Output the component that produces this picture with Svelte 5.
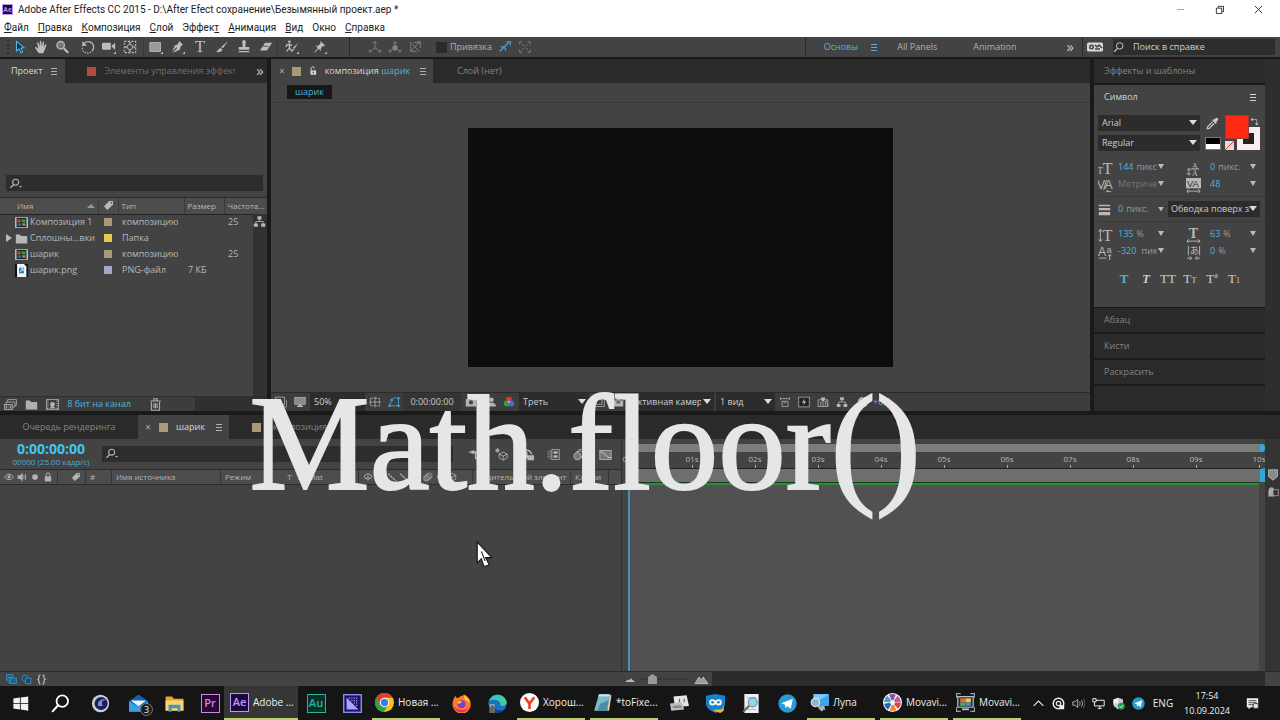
<script lang="ts">
  type Hot = { icon: string; value: string; unit: string; label: string; off?: boolean };
  type Task = { icon: string; label: string; text?: string; wide?: boolean; badge?: string; active?: boolean };

  // ── Иконки, сетка 16×16 ──
  const s = `fill="none" stroke="currentColor"`;
  const corner = `<path fill="currentColor" d="M16 13v3h-3z"/>`;
  const icons: Record<string, string> = {
    arrow: `<path fill="#0c2a3a" stroke="#4cb8e6" stroke-width="1.2" d="M4 1.500v11l3-2.500 2 4.500 2-1-2-4.300 3.700-.2z"/>`,
    hand: `<path fill="currentColor" d="M5.500 15 1.500 9.500c-.8-1.200.5-2 1.400-1.100L5 10 3.600 3.600c-.2-1.200 1.300-1.500 1.600-.4L6.700 7.500 6.600 1.800c0-1.200 1.600-1.200 1.700 0L8.800 7.300l1.100-4.800c.3-1.100 1.800-.8 1.600.4L10.900 8l1.800-2.700c.7-1 2-.2 1.400.9-1 2-1.500 4-2.200 6L10.500 15z"/>`,
    zoom: `<circle cx="6.500" cy="6" r="4.300" fill="#777" stroke="currentColor" stroke-width="1.500"/><path ${s} stroke-width="2.500" d="m10 9.500 5 5"/>`,
    rotate: `<path ${s} stroke-width="1.400" d="M4 3.500a6 6 0 0 1 8.500 9"/><path ${s} stroke-width="1.400" stroke-dasharray="1.500 1.500" d="M2.300 6A6 6 0 0 0 12 13"/><path fill="currentColor" d="M1.500 1v5.500H7z"/>`,
    camera: `<rect x="0" y="3" width="10" height="8" rx="1" fill="currentColor"/><path fill="currentColor" d="m10.500 7 4.500-4v8z"/>${corner}`,
    anchor: `<path ${s} stroke-width="1.300" stroke-dasharray="2.500 1.500" d="M1.500 1.500h13v13h-13z"/><circle cx="8" cy="8" r="3" ${s}/><path fill="currentColor" d="M8 2l2 2H6zM8 14l2-2H6zM2 8l2-2v4zM14 8l-2-2v4z"/>`,
    rect: `<rect x="1" y="3" width="12" height="10" fill="#999" stroke="currentColor"/>${corner}`,
    pen: `<path fill="currentColor" d="m9.500 1 4 4-2.500 2.500-1 3.500L2 14.500l5-5.500-.8-.8L1.200 13.500 4.500 6l3-1z"/>${corner}`,
    brush: `<path fill="currentColor" d="M15 1 9 9.500 7 8zM6.500 9l2 1.800C7.500 13.500 4 14.500 1 13.500c2-.5 3-4 5.500-4.500z"/>`,
    stamp: `<path fill="currentColor" d="M6 1.500c0-1.500 4-1.500 4 0L9.500 8H14v3H2V8h4.500zM2 12.500h12V14H2z"/>`,
    eraser: `<path fill="currentColor" d="M7 3h8l-6 9H1z"/><path fill="none" stroke="#444" d="m4.500 7 6.500.2"/>`,
    roto: `<circle cx="5" cy="2" r="1.500" fill="currentColor"/><path ${s} stroke-width="1.500" d="M5 4v5l-3 4M5 9l3 4M1 8l1.500-3L8 6"/><path fill="currentColor" d="m15 3-4 7-2-1zM9 10l2 1-4 3z"/>${corner}`,
    pin: `<path fill="currentColor" d="m8.500 1 5.500 5.500-1.500.5-1-.3L9 9.500v3L6.300 10 2 14.500 1.500 14 5.500 9.200 3 6.500h3L8.500 4z"/>${corner}`,
    axis: `<path ${s} d="M8 9V2M8 9l-6 4M8 9l6 4M6 4l2-2.500L10 4M4 13.500H1.500V11M12 13.500h2.500V11"/>`,
    axisWorld: `<path ${s} d="M8 9V2M6 4l2-2.500L10 4M4 13.500H1.500V11M12 13.500h2.500V11M2 13l3-2M14 13l-3-2"/><circle cx="8" cy="9" r="3" fill="currentColor"/>`,
    axisView: `<path ${s} d="m2 2 11 11M13 2 3 13M3 5v8h7M6 3h8v6M11 2h3v3"/>`,
    snapEdge: `<path fill="none" stroke="#4cb8e6" stroke-width="1.200" d="M2 13 12 3M10 2h4v4M3 8c3-1 5 0 6 4"/>`,
    snapBox: `<path ${s} d="M2 5V2h3M11 2h3v3M14 11v3h-3M5 14H2v-3M5 5l2 2M11 5 9 7M5 11l2-2M11 11 9 9"/>`,
    sync: `<rect y="3.500" width="16" height="9" rx="1.500" fill="#d8d8d8"/><circle cx="4.500" cy="8" r="2.500" fill="#444"/><circle cx="4.500" cy="8" r="1" fill="#d8d8d8"/><path stroke="#444" stroke-width="1.500" fill="none" d="m8 6 2 2 2-2 3 3M8 10h5"/>`,
    search: `<circle cx="9" cy="6.500" r="4.300" ${s} stroke-width="1.300"/><path ${s} stroke-width="1.500" d="m6 10-4.500 4.500"/>`,
    searchDrop: `<circle cx="7" cy="6.500" r="3.700" ${s} stroke-width="1.300"/><path ${s} stroke-width="1.500" d="m4.500 9.300-4 4"/><path fill="currentColor" d="M11 11h4l-2 2z"/>`,
    tag: `<path fill="currentColor" d="M9 1.500h5.500V7L6 14.500 1.500 9z"/><circle cx="12" cy="4" r="1.200" fill="#444"/>`,
    comp: `<rect width="16" height="13" y="1.500" fill="#b8b8b8"/><rect x="2" y="2.500" width="12" height="11" fill="#122"/><path fill="#c4502a" d="M3 4h4v4H3z"/><path fill="#2e9a48" d="M8 4h5v4H8z"/><path fill="#2a6fb0" d="M3 9h5v3H3z"/><path fill="#b78733" d="M9 9h4v3H9z"/>`,
    folder: `<path fill="currentColor" d="M1 3h5l1.500 2H15v9H1z"/>`,
    png: `<path fill="#111" d="M0 0h16v16H0z"/><path fill="#f4f4f4" d="M2.500 0H11l3 3v13H2.500z"/><path fill="#1c82c8" d="M5 4.500h6v7H5z"/><path stroke="#fff" fill="none" d="m6 10 4-4M7 6h3v3"/>`,
    tree: `<path fill="currentColor" d="M5.500 1.500h5v4h-5zM1 10.500h5v4H1zM10 10.500h5v4h-5z"/><path ${s} d="M8 5v3M3.500 11V8h9v3"/>`,
    interpret: `<path ${s} d="M4.500 5V2h11v7H13M2.500 8V5h11v6H11"/><rect x=".5" y="8" width="10" height="6" fill="#555" stroke="currentColor"/><path ${s} d="M3 9.500v3M8 9.500v3"/>`,
    filmstrip: `<rect x=".5" y="2" width="15" height="12" fill="none" stroke="currentColor"/><path ${s} stroke-dasharray="1.500 1.500" stroke-width="1.500" d="M2.300 3v11M13.700 3v11"/><circle cx="8" cy="8" r="3" fill="currentColor"/><path fill="currentColor" d="M4 13h8l-4-4z"/>`,
    trash: `<path ${s} stroke-width="1.300" d="M3 5v10h10V5M1.500 3.700h13M6 3V1h4v2M6 6.500v6M8 6.500v6M10 6.500v6"/>`,
    lock: `<rect x="3" y="7" width="10" height="8" fill="currentColor"/><path ${s} stroke-width="1.600" d="M5 7V4.500a3 3 0 0 1 6 0V7"/>`,
    unlock: `<rect x="4" y="7" width="9" height="7" fill="currentColor"/><path ${s} stroke-width="1.500" d="M5 7V4a2.600 2.600 0 0 1 5.200 0"/><rect x="7.500" y="9" width="2" height="3" fill="#444"/>`,
    preview: `<path ${s} d="M3.500 14.500h12v-9"/><rect x=".5" y="1.500" width="12" height="10" ${s}/><path fill="currentColor" d="m4 3.500 5 3-5 3z"/>`,
    monitor: `<rect x="1" y="2" width="14" height="9" fill="#8a8a8a" stroke="currentColor"/><path fill="currentColor" d="M6 11h4v2h2v1.500H4V13h2z"/>`,
    guides: `<rect x="2" y="3" width="12" height="10" ${s} stroke-dasharray="4 1"/><path ${s} d="M8 1v14M0 8h16"/>`,
    mask: `<path fill="none" stroke="#3f9fd0" stroke-width="1.200" d="M2 13 5 5c2-3 5-3 9-2v10z"/><path fill="#3f9fd0" d="M.5 11.500h3v3h-3zM3.500 3.500h3v3h-3zM12.500 1.500h3v3h-3zM12.500 11.500h3v3h-3z"/>`,
    photo: `<path fill="currentColor" d="M1 4h3l1-2h6l1 2h3v10H1z"/><circle cx="8" cy="8.500" r="2.800" fill="#444"/>`,
    person: `<circle cx="10" cy="5" r="3" fill="currentColor"/><path fill="currentColor" d="M4 14c0-7 12-7 12 0z"/>`,
    rgb: `<circle cx="8" cy="5" r="4" fill="#d93a35"/><circle cx="5" cy="10" r="4" fill="#32a047"/><circle cx="11" cy="10" r="4" fill="#3b6fe0"/><path fill="#e8e8e8" d="M6.500 7h3L8 10z"/>`,
    region: `<rect x="1" y="2" width="14" height="12" ${s}/><rect x="4" y="5" width="8" height="6" ${s}/>`,
    checker: `<path fill="currentColor" d="M1 2h14v12H1z"/><path fill="#666" d="M1 2h5v4H1zM11 2h4v4h-4zM6 6h5v4H6z"/>`,
    pixel: `<path ${s} d="M2 2v3M14 2v3M2 3.500h12M4 7h8v7H4zM6 9h4"/>`,
    fast: `<rect x="1" y="1.500" width="14" height="13" fill="#222" stroke="currentColor"/><path fill="currentColor" d="M9 3 5 9h3l-1 4 4-6H8z"/>`,
    timelineBtn: `<path ${s} d="M1.500 14V5H4M12 5h2.500v9zM1 14h14M5 14V7M8 14V8M11 14V7"/><path fill="currentColor" d="M5 2h6v3L8 8 5 5z"/>`,
    exposure: `<circle cx="8" cy="8" r="5.500" ${s} stroke-width="3"/><path stroke="#333" fill="none" d="m8 1 2 5M15 8l-5 1M8 15l-2-5M1 8l5-1"/>`,
    eyedrop: `<path fill="currentColor" d="M14.500 1.500c1.500 1.500 0 3-2 4.500l1 1-1.500 1.500-4.500-4.500L9 2.500l1 1c1.500-2 3-3.500 4.500-2z"/><path ${s} stroke-width="1.500" d="m8 6-6 6-.5 2.500L4 14l6-6"/>`,
    swap: `<path ${s} stroke-width="1.400" d="M4 4.500h8V13"/><path fill="currentColor" d="M5 1v7L1 4.500zM8.500 11h7L12 15z"/>`,
    fontSize: `<text x="-1" y="14" font-size="11" font-family="Liberation Serif" fill="currentColor">T</text><text x="5" y="14" font-size="17" font-family="Liberation Serif" fill="currentColor">T</text>`,
    leading: `<text x="6" y="8" font-size="9" font-family="Liberation Serif" fill="currentColor">A</text><text x="6" y="16" font-size="9" font-family="Liberation Serif" fill="currentColor">A</text><path ${s} d="M5 8.500h9M3 8v7M1 10l2-2 2 2M1 13l2 2 2-2"/>`,
    kerning: `<text x="-1" y="12" font-size="13" font-family="Liberation Sans" fill="currentColor">V</text><text x="7" y="12" font-size="13" font-family="Liberation Sans" fill="currentColor">A</text><path ${s} d="M9 2 6 13M14 14.500H9M11 12.500 9 14.500"/>`,
    tracking: `<path fill="currentColor" d="M0 0h16v11H0z"/><text x="1" y="10" font-size="10" font-family="Liberation Sans" fill="#333">VA</text><path ${s} d="M1 14h14M3 12l-2 2 2 2M13 12l2 2-2 2"/>`,
    stroke: `<path fill="currentColor" d="M1 2h14v2H1zM1 6h14v3H1zM1 11h14v4H1z"/>`,
    vscale: `<path ${s} d="M2.500 2v12M.5 4l2-2.500 2 2.500M.5 12l2 2.500 2-2.500"/><text x="5" y="14" font-size="17" font-family="Liberation Serif" fill="currentColor">T</text>`,
    hscale: `<text x="3" y="11" font-size="15" font-weight="bold" font-family="Liberation Serif" fill="currentColor">T</text><path ${s} d="M1 14h14M3 12l-2 2 2 2M13 12l2 2-2 2"/>`,
    baseline: `<text x="0" y="12" font-size="13" font-family="Liberation Sans" fill="currentColor">A</text><text x="9" y="8" font-size="10" font-family="Liberation Sans" fill="currentColor">a</text><path ${s} d="M1 14h8M12.500 10v6M10.500 12l2-2 2 2"/>`,
    tsume: `<text x="4" y="10" font-size="10" font-family="Noto Sans CJK JP" fill="currentColor">あ</text><path ${s} d="M2.500 1v10M14.500 1v10M1 14h5M4 12l2 2-2 2M15 14h-5M12 12l-2 2 2 2"/>`,
    eye: `<path ${s} stroke-width="1.500" d="M1 8c4-6 10-6 14 0-4 5.500-10 5.500-14 0z"/><circle cx="8" cy="7.500" r="2.500" fill="currentColor"/>`,
    speaker: `<path fill="currentColor" d="M1 5h4l4-4v14l-4-4H1z"/><path ${s} stroke-width="1.400" d="M11 5v6M13.500 3v10"/>`,
    dot: `<circle cx="8" cy="8" r="4.500" fill="currentColor"/>`,
    flow: `<path ${s} stroke-width="1.400" d="M0 5h6M6 5h4M8 5v8h3"/><path fill="currentColor" d="M3 3h4v4H3zM10 3h4v4h-4zM11 11h4v4h-4z"/>`,
    cube: `<path ${s} stroke-width="1.300" d="m8 2 6 3v6l-6 3.500L2 11V5zM2 5l6 3 6-3M8 8v6"/>`,
    draft: `<path ${s} d="m10 5 5 2.500V12l-5 3-5-3V7.500zM5 7.500 10 10l5-2.500M10 10v5M3 0v6M0 3h6M1 1l4 4M5 1 1 5"/>`,
    shy: `<path ${s} stroke-width="1.600" d="M2 9c0-8 12-8 12 0"/><path fill="currentColor" d="M7 6h2v7H7zM3 9h3v2H3zM10 9h3v2h-3z"/>`,
    shyBox: `<path ${s} stroke-width="1.600" d="M1 8c0-7 11-7 12 0"/><path fill="currentColor" d="M6 5h2v8H6zM8 9h8v6H8z"/>`,
    frames: `<rect x="6" y="2" width="9" height="12" ${s}/><path ${s} stroke-dasharray="2 1" d="M1.500 4v9M4 3v11"/><path fill="currentColor" d="M8 4h5v3H8zM8 9h5v3H8z"/>`,
    blur: `<circle cx="10" cy="6" r="4.500" ${s}/><circle cx="8" cy="8" r="4.500" ${s}/><circle cx="5.500" cy="10" r="4.500" fill="#777" stroke="currentColor"/>`,
    graph: `<rect x="1" y="3" width="14" height="11" fill="#777" stroke="currentColor"/><path stroke="#ddd" fill="none" d="M2 5c6 0 6 7 13 7"/>`,
    slash: `<path ${s} stroke-width="2" stroke-dasharray="4 1" d="m2 3 12 11"/>`,
    marker: `<path fill="#8a8a8a" stroke="#c0c0c0" d="M2 1h12v9l-6 5-6-5z"/>`,
    ghost: `<path fill="#aaa" d="M1 14c2-2 0-4 1-8 1-6 7-6 8 0v8z"/><rect x="8" y="5" width="7" height="8" fill="#333" stroke="#aaa"/>`,
    toggleA: `<rect x="1" y="1" width="9" height="8" fill="#1d6288" stroke="#3f9fd0"/><rect x="6" y="6" width="9" height="8" fill="#1d6288" stroke="#3f9fd0"/><path stroke="#3f9fd0" fill="none" d="M3 12.500h3M3 5h5"/>`,
    toggleB: `<circle cx="6" cy="6" r="4.500" fill="#174a66" stroke="#3f9fd0"/><rect x="6.500" y="6" width="8" height="8" fill="#174a66" stroke="#3f9fd0"/>`,
    braces: `<path ${s} stroke-width="1.800" d="M6.500 1.500C3 1 5.500 7 3 8c2.500 1 0 7 3.500 6.500M9.500 1.500C13 1 10.500 7 13 8c-2.500 1 0 7-3.500 6.500"/>`,
    hill: `<path fill="#bbb" d="m0 12 5-4 2 1.500L9 6l7 6z"/>`,
    hills: `<path fill="#999" stroke="#ccc" d="m0 13 5-8 3 4 2-4 6 8z"/>`,
    // панель задач
    win: `<path fill="#f2f2f2" d="m2 3.800 5.500-.8v4.700H2zM8.200 2.900 14.500 2v5.700H8.200zM2 8.400h5.500v4.700L2 12.300zM8.200 8.400h6.300V14l-6.300-.9z"/>`,
    find: `<circle cx="9.500" cy="6" r="4.800" fill="none" stroke="#fff" stroke-width="1.500"/><path stroke="#fff" stroke-width="1.700" d="M6 9.500 1 15"/>`,
    cinema: `<circle cx="8" cy="8" r="7.300" fill="#c9ccda"/><circle cx="8.500" cy="8" r="5.500" fill="#15205c"/><path fill="#7f8fd0" d="M6 10c-1-4 3-7 7-5-3 0-5 1-3 5z"/>`,
    mail: `<path fill="#0f63ae" d="m0 6 8-5.500L16 6v9H0z"/><path fill="#eaf4fc" d="M1.500 5.500h13l-6.500 5z"/><path fill="#35a3ec" d="m0 6 8 5 8-5v9H0z"/>`,
    explorer: `<path fill="#e5a82d" d="M.5 2H6l1.500 2h8v10H.5z"/><path fill="#f9d66b" d="M.5 5.500h15V14H.5z"/><path fill="#3d97cf" d="M3 9h10v6h-2.500v-3h-5v3H3z"/>`,
    me: `<rect x=".6" y=".6" width="14.800" height="14.800" fill="#1a1260" stroke="#8c88ee" stroke-width="1.200"/><path fill="#a6a4ff" d="M3 3v10h10z"/><path stroke="#a6a4ff" stroke-dasharray="1 1" fill="none" d="M5 3.500h8M7 5.500h6M9 7.500h4M11 9.500h2"/>`,
    chrome: `<circle cx="8" cy="8" r="8" fill="#fbc116"/><path fill="#e33b2e" d="M1 4a8 8 0 0 1 14 0H8L4.500 10z"/><path fill="#2da14c" d="M1 4a8 8 0 0 0 6.500 12L11 10H4.500z"/><circle cx="8" cy="8" r="4" fill="#fff"/><circle cx="8" cy="8" r="3.100" fill="#3b7de9"/>`,
    firefox: `<path fill="#ff7a22" d="M8 1.500c2 0 2-1 1.500-1.500 4 1.500 6.500 5 6.300 9A7.500 7.500 0 0 1 .5 9C.3 6 1.500 3.500 3 1.500c.2 1 .7 1.500 1.500 2z"/><path fill="#ffd23d" d="M10 1c3 2 5 4 5 7-1-2-3-3-4-3z"/><path fill="#e8316a" d="M1 10c2 6 10 8 14 1-4 4-10 3-14-1z"/><circle cx="8" cy="8.500" r="3.500" fill="#7d3fd0"/><path fill="#ffb02e" d="M4 6c3-1 4 0 5 1-2 0-2 1.500-4 1.500z"/>`,
    edge: `<circle cx="8" cy="8" r="7.700" fill="#1572c8"/><path fill="#45c9a0" d="M1 6C3-1 14-1 15.800 7c0 3-4 4-5.500 2.500C12 6 5 3 1 6z"/><path fill="#0d3f80" d="M5 9c0 5 5 6 9 4-4 5-12 2-9-4z"/><path fill="#666" d="M1 11h5v5H1z"/><path stroke="#aaa" fill="none" d="M2 11V9h3v2"/>`,
    yandex: `<circle cx="8" cy="8" r="8" fill="#fff"/><path stroke="#e8402c" stroke-width="2.200" fill="none" d="m4 3.500 4 5.500 4-5.500M8 8.500v5"/>`,
    notepad: `<path fill="#7db8cc" d="M5 1h9l-2 14H1z"/><path fill="#c7e3ec" d="M5 1h9l-.4 2H4.500z"/><path fill="#4c8ca5" d="m6 9 7-3-1 9H4z"/><path fill="#d9d2c2" d="m14 1 1.500 1-2 13H12z"/>`,
    printers: `<path fill="#e6e6e6" d="m3 2 11-1 2 9-12 1z"/><path fill="#bdbdbd" d="m0 8 10-1 2 6-11 1z"/><path fill="#888" d="m2 10 7-.5 1 2-7 .5z"/><path stroke="#666" fill="none" d="M8 4v3M12 4v3"/>`,
    vpn: `<path fill="#1583cc" d="M0 1.500 8 0l8 1.500V8c0 4-4 6-8 8-4-2-8-4-8-8z"/><path fill="none" stroke="#fff" stroke-width="1.600" d="M8 7C7 4.500 3.500 4.500 3.500 7S7 9.500 8 7s4.500-2.500 4.500 0S9 9.500 8 7z"/><path fill="#e3b83a" d="m6 14 2-1 5 0 2-3v4l-3 2z"/>`,
    doc: `<path fill="#eef1f4" d="M2 0h12v16H2z"/><path stroke="#b9c2cc" d="M4 3h8M4 13h8"/><circle cx="9" cy="7" r="3.800" fill="#9ed0f0" stroke="#6b93b0"/><path stroke="#7a6650" stroke-width="1.800" d="m6 10-5 5"/>`,
    telegram: `<circle cx="8" cy="8" r="7.700" fill="#259bd8"/><path fill="#fff" d="m2.800 7.800 9.700-3.800-1.700 8.500-3-2.200-1.500 1.500-.5-2.800z"/>`,
    magnifier: `<path fill="#3fa4ea" d="M3 1h13v10H3z"/><path fill="#7ccbf8" d="M3 1h13L3 9z"/><path fill="#a9b4bd" d="M9 11h3l1 3H8z"/><circle cx="4.500" cy="8" r="3.500" fill="#8fb5ca" stroke="#dde5ea"/><path stroke="#b8b8b8" stroke-width="2" d="m7 11 3.500 4"/>`,
    movaviA: `<circle cx="8" cy="8" r="8" fill="#f5f5f5"/><circle cx="8" cy="8" r="4.600" fill="none" stroke="#d8453a" stroke-width="5" stroke-dasharray="3.800 25"/><circle cx="8" cy="8" r="4.600" fill="none" stroke="#e98d29" stroke-width="5" stroke-dasharray="0 4.800 3.800 25"/><circle cx="8" cy="8" r="4.600" fill="none" stroke="#2b62b4" stroke-width="5" stroke-dasharray="0 9.600 3.800 25"/><circle cx="8" cy="8" r="4.600" fill="none" stroke="#39a1cf" stroke-width="5" stroke-dasharray="0 14.400 3.800 25"/><circle cx="8" cy="8" r="4.600" fill="none" stroke="#8b51a6" stroke-width="5" stroke-dasharray="0 19.200 3.800 25"/><circle cx="8" cy="8" r="4.600" fill="none" stroke="#d0569b" stroke-width="5" stroke-dasharray="0 24 3.800 25"/>`,
    movaviB: `<path fill="none" stroke="#8fa4b0" d="M.5 4V.5H4M12 .5h3.500V4M.5 12v3.500H4M12 15.500h3.500V12"/><path fill="#23303a" stroke="#b4c4cc" d="M1.500 3h13v9h-13z"/><path fill="#df6a3d" d="M3.500 4.500H8V8H3.500z"/><path fill="#e8c84a" d="M8 4.500h4.500V8H8z"/><path fill="#4aa85a" d="M3.500 8H8v3H3.500z"/><path fill="#4a86c8" d="M8 8h4.500v3H8z"/><path fill="#b4c4cc" d="M5 13h6v1.500H5z"/>`,
    up: `<path fill="none" stroke="#eee" stroke-width="1.300" d="m2 11 6-6 6 6"/>`,
    at: `<circle cx="8" cy="8" r="6.500" fill="none" stroke="#eee" stroke-width="1.800"/><circle cx="8" cy="8" r="2.700" fill="none" stroke="#eee" stroke-width="1.500"/><path fill="#eee" d="M9 10h6v5H9z"/>`,
    volume: `<path fill="none" stroke="#ccc" d="M1 6h3l3-3v10l-3-3H1zM9 5.500c1.200 1.500 1.200 3.500 0 5M11.500 4c2 2.500 2 5.500 0 8"/><path fill="none" stroke="#777" d="M14 2.500c2.500 3.500 2.500 7.500 0 11"/>`,
    net: `<path fill="none" stroke="#eee" stroke-width="1.200" d="M5 4h10v7H3V8M7 14h5M9.500 11v3M1 2h4v4H1zM3 6v3"/>`,
    defender: `<path fill="#f2f2f2" d="m7.500 1 6 2v5c0 3-3 5-6 7-3-2-6-4-6-7V3z"/><path fill="#999" d="M7.500 1v14c-3-2-6-4-6-7h12V3z" opacity=".4"/><circle cx="11.500" cy="11.500" r="4.300" fill="#1c9a4d"/><path fill="none" stroke="#fff" stroke-width="1.200" d="m9.500 11.500 1.500 1.500 2.500-3"/>`,
    notes: `<path fill="#f2f2f2" d="M1 1.500h14v11H6L3 15v-2.500H1z"/><path stroke="#222" d="M3 4.500h10M3 7h10M3 9.500h6"/><circle cx="12" cy="11" r="3.500" fill="#ddd" stroke="#222"/>`,
  };

  const menu = ["Файл", "Правка", "Композиция", "Слой", "Эффект", "Анимация", "Вид", "Окно", "Справка"];
  // позиция подчёркнутой буквы, -1 — нет
  const accel = [0, 0, 0, 0, 5, 0, 0, -1, 0];

  const tools = [
    { cls: "t21", items: ["arrow", "hand", "zoom"] },
    { cls: "t21 g2", items: ["rotate", "camera", "anchor"] },
    { cls: "t22", items: ["rect", "pen", "type", "brush", "stamp", "eraser"] },
    { cls: "t28", items: ["roto", "pin"] },
    { cls: "t20", items: ["axis", "axisWorld", "axisView"] },
  ];

  const files = [
    { icon: "comp", name: "Композиция 1", color: "#a99a78", type: "композицию", size: "", rate: "25" },
    { icon: "folder", name: "Сплошны...вки", color: "#e4c956", type: "Папка", size: "", rate: "" },
    { icon: "comp", name: "шарик", color: "#a99a78", type: "композицию", size: "", rate: "25" },
    { icon: "png", name: "шарик.png", color: "#a6a6c8", type: "PNG-файл", size: "7 КБ", rate: "" },
  ];

  const metrics: Hot[] = [
    { icon: "fontSize", value: "144", unit: "пикс.", label: "Размер шрифта" },
    { icon: "leading", value: "0", unit: "пикс.", label: "Интерлиньяж" },
    { icon: "kerning", value: "Метрические", unit: "", label: "Кернинг", off: true },
    { icon: "tracking", value: "48", unit: "", label: "Трекинг" },
  ];
  const scales: Hot[] = [
    { icon: "vscale", value: "135", unit: "%", label: "Масштаб по вертикали" },
    { icon: "hscale", value: "63", unit: "%", label: "Масштаб по горизонтали" },
    { icon: "baseline", value: "-320", unit: "пикс.", label: "Смещение базовой линии" },
    { icon: "tsume", value: "0", unit: "%", label: "Цумэ" },
  ];

  const seconds = ["00s", "01s", "02s", "03s", "04s", "05s", "06s", "07s", "08s", "09s", "10s"];

  const tasks: Task[] = [
    { icon: "win", label: "Пуск", wide: true },
    { icon: "find", label: "Поиск", wide: true },
    { icon: "cinema", label: "Cinema 4D", wide: true },
    { icon: "mail", label: "Почта", badge: "3" },
    { icon: "explorer", label: "Проводник" },
    { icon: "Pr", label: "Premiere Pro" },
    { icon: "Ae", label: "After Effects", text: "Adobe ...", active: true },
    { icon: "Au", label: "Audition" },
    { icon: "me", label: "Media Encoder" },
    { icon: "chrome", label: "Chrome", text: "Новая ..." },
    { icon: "firefox", label: "Firefox" },
    { icon: "edge", label: "Edge" },
    { icon: "yandex", label: "Яндекс", text: "Хорош..." },
    { icon: "notepad", label: "Блокнот", text: "*toFixe..." },
    { icon: "printers", label: "Принтеры" },
    { icon: "vpn", label: "VPN" },
    { icon: "doc", label: "Просмотр" },
    { icon: "telegram", label: "Telegram" },
    { icon: "magnifier", label: "Экранная лупа", text: "Лупа" },
    { icon: "movaviA", label: "Movavi Editor", text: "Movavi..." },
    { icon: "movaviB", label: "Movavi Recorder", text: "Movavi..." },
  ];

  let snap = $state(false);
  let zoom = $state(20);
</script>

{#snippet icon(name: string)}
  <svg class="icon" viewBox="0 0 16 16" aria-hidden="true">{@html icons[name]}</svg>
{/snippet}

{#snippet adobe(name: string)}
  <span class="adobe {name}">{name}</span>
{/snippet}

{#snippet burger()}
  <span class="burger"></span>
{/snippet}

{#snippet hot(h: Hot)}
  <label class="hot">
    {@render icon(h.icon)}
    <span class="hot-value" class:off={h.off}>
      <input value={h.value} aria-label={h.label} style:width="{h.value.length}ch" />{h.unit}
    </span>
    <i class="caret"></i>
  </label>
{/snippet}

<div class="screen">
  <header class="title-bar">
    <span class="adobe Ae small">Ae</span>
    <span class="title">Adobe After Effects CC 2015 - D:\After Efect сохранение\Безымянный проект.aep *</span>
    <div class="win-buttons">
      <button aria-label="Свернуть"><svg viewBox="0 0 10 10"><path d="M1 5h8" stroke="#999" /></svg></button>
      <button aria-label="Восстановить"><svg viewBox="0 0 10 10"><path d="M1.500 3.500h6v6h-6zM3.500 3V1.500h6v6H8" fill="none" stroke="#222" /></svg></button>
      <button aria-label="Закрыть"><svg viewBox="0 0 10 10"><path d="m1 1 8 8M9 1 1 9" stroke="#222" /></svg></button>
    </div>
  </header>

  <nav class="menu">
    {#each menu as item, i}
      <button>{#if accel[i] >= 0}{item.slice(0, accel[i])}<u>{item[accel[i]]}</u>{item.slice(accel[i] + 1)}{:else}{item}{/if}</button>
    {/each}
  </nav>

  <div class="toolbar">
    <span class="grip"></span>
    {#each tools as group}
      <div class="tools {group.cls}">
        {#each group.items as name}
          <button aria-label={name}>
            {#if name === "type"}<span class="type-tool">T</span>{:else}{@render icon(name)}{/if}
          </button>
        {/each}
      </div>
    {/each}
    <label class="snap"><input type="checkbox" bind:checked={snap} />Привязка</label>
    <div class="tools t20 snap-tools">
      <button aria-label="Привязка к краям">{@render icon("snapEdge")}</button>
      <button aria-label="Привязка к элементам">{@render icon("snapBox")}</button>
    </div>
    <div class="workspaces">
      <button class="blue ws-main">Основы {@render burger()}</button>
      <button class="ws">All Panels</button>
      <button class="ws">Animation</button>
      <button class="more" aria-label="Ещё">»</button>
    </div>
    <button class="sync" aria-label="Синхронизация">{@render icon("sync")}</button>
    <label class="help">
      {@render icon("search")}
      <input type="search" placeholder="Поиск в справке" />
    </label>
  </div>

  <main class="panels">
    <!-- Проект -->
    <section class="project">
      <div class="tabs">
        <button class="tab on tab-project">Проект {@render burger()}</button>
        <button class="tab tab-fx"><i class="sq" style:background="#b54b3c"></i><span>Элементы управления эффектами</span></button>
        <button class="more" aria-label="Ещё">»</button>
      </div>
      <div class="thumb"></div>
      <label class="search">{@render icon("searchDrop")}<input type="search" aria-label="Поиск в проекте" /></label>
      <div class="files">
        <table>
          <colgroup><col class="c-name" /><col class="c-tag" /><col class="c-type" /><col class="c-size" /><col /></colgroup>
          <thead>
            <tr>
              <th class="name-head"><span>Имя<i class="sort"></i></span></th>
              <th class="tag-head">{@render icon("tag")}</th>
              <th>Тип</th>
              <th>Размер</th>
              <th>Частота...</th>
            </tr>
          </thead>
          <tbody>
            {#each files as file}
              <tr>
                <td><span class="file"><i class="twist" class:show={file.icon === "folder"}></i>{@render icon(file.icon)}{file.name}</span></td>
                <td class="mid"><i class="sq label" style:background={file.color}></i></td>
                <td>{file.type}</td>
                <td>{file.size}</td>
                <td>{file.rate}</td>
              </tr>
            {/each}
          </tbody>
        </table>
        <div class="file-scroll">{@render icon("tree")}</div>
      </div>
      <footer class="project-foot">
        <button aria-label="Интерпретировать">{@render icon("interpret")}</button>
        <button aria-label="Новая папка">{@render icon("folder")}</button>
        <button aria-label="Новая композиция">{@render icon("filmstrip")}</button>
        <button class="blue depth">8 бит на канал</button>
        <button aria-label="Удалить">{@render icon("trash")}</button>
        <span class="hscroll"></span>
      </footer>
    </section>

    <!-- Композиция -->
    <section class="comp">
      <div class="tabs">
        <button class="tab on tab-comp">
          <span class="close">×</span><i class="sq" style:background="#a99a78"></i>{@render icon("unlock")}
          <span>композиция <b class="blue">шарик</b></span>{@render burger()}
        </button>
        <button class="tab tab-layer">Слой (нет)</button>
      </div>
      <div class="crumbs"><button class="blue">шарик</button></div>
      <div class="viewer"><div class="canvas"></div></div>
      <footer class="comp-foot">
        <button aria-label="Просмотр">{@render icon("preview")}</button>
        <button aria-label="Монитор">{@render icon("monitor")}</button>
        <label class="drop d50"><select aria-label="Масштаб"><option>50%</option></select></label>
        <button aria-label="Сетка">{@render icon("guides")}</button>
        <button aria-label="Маски">{@render icon("mask")}</button>
        <button class="time">0:00:00:00</button>
        <button aria-label="Снимок">{@render icon("photo")}</button>
        <button aria-label="Показать снимок">{@render icon("person")}</button>
        <button aria-label="Каналы">{@render icon("rgb")}</button>
        <label class="drop d-res"><select aria-label="Разрешение"><option>Треть</option></select></label>
        <button aria-label="Область">{@render icon("region")}</button>
        <button aria-label="Прозрачность">{@render icon("checker")}</button>
        <label class="drop d-cam"><select aria-label="Камера"><option>Активная камера</option></select></label>
        <label class="drop d-view"><select aria-label="Виды"><option>1 вид</option></select></label>
        <button aria-label="Пропорции пикселей">{@render icon("pixel")}</button>
        <button aria-label="Быстрый просмотр">{@render icon("fast")}</button>
        <button aria-label="Таймлайн">{@render icon("timelineBtn")}</button>
        <button aria-label="Блок-схема">{@render icon("tree")}</button>
        <button class="expo" aria-label="Экспозиция">{@render icon("exposure")}</button>
        <button class="blue expo-value">+0,0</button>
      </footer>
    </section>

    <!-- Символ -->
    <aside class="side">
      <div class="stack">
        <button class="fold">Эффекты и шаблоны</button>
        <section class="char">
          <h2>Символ {@render burger()}</h2>
          <div class="fonts">
            <div class="font-selects">
              <label class="drop"><select aria-label="Шрифт"><option>Arial</option></select></label>
              <label class="drop"><select aria-label="Начертание"><option>Regular</option></select></label>
            </div>
            <div class="font-mid">
              <button aria-label="Пипетка">{@render icon("eyedrop")}</button>
              <button class="bw" aria-label="Чёрный и белый"></button>
            </div>
            <div class="swatches">
              <button class="stroke-color" aria-label="Цвет обводки"></button>
              <button class="fill-color" aria-label="Цвет заливки"></button>
              <button class="no-color" aria-label="Без заливки"></button>
              <button class="swap" aria-label="Поменять местами">{@render icon("swap")}</button>
            </div>
          </div>
          <div class="metrics">
            {#each metrics as m}{@render hot(m)}{/each}
          </div>
          <div class="stroke-row">
            {@render hot({ icon: "stroke", value: "0", unit: "пикс.", label: "Толщина обводки" })}
            <label class="drop"><select aria-label="Порядок обводки"><option>Обводка поверх заливки</option></select></label>
          </div>
          <div class="metrics">
            {#each scales as m}{@render hot(m)}{/each}
          </div>
          <div class="faux">
            <button class="on"><b>T</b></button>
            <button><b><i>T</i></b></button>
            <button>TT</button>
            <button>T<small>T</small></button>
            <button>T<sup>a</sup></button>
            <button>T<sub>1</sub></button>
          </div>
        </section>
        <button class="fold">Абзац</button>
        <button class="fold">Кисти</button>
        <button class="fold">Раскрасить</button>
      </div>
    </aside>
  </main>

  <!-- Таймлайн -->
  <section class="timeline">
    <div class="tabs">
      <button class="tab tab-queue">Очередь рендеринга</button>
      <button class="tab on tab-seq"><span class="close">×</span><i class="sq" style:background="#a99a78"></i>шарик {@render burger()}</button>
      <button class="tab tab-next"><i class="sq" style:background="#a99a78"></i>композиция 1</button>
    </div>
    <div class="tl-grid">
      <div class="layers">
        <div class="tl-top">
          <div class="clock">
            <strong>0:00:00:00</strong>
            <span>00000 (25.00 кадр/с)</span>
          </div>
          <label class="search">{@render icon("searchDrop")}<input type="search" aria-label="Поиск слоя" /></label>
          <div class="tl-icons">
            {#each ["flow", "draft", "shyBox", "frames", "blur", "graph"] as name}
              <button aria-label={name}>{@render icon(name)}</button>
            {/each}
          </div>
        </div>
        <div class="cols">
          <span class="col av">{@render icon("eye")}{@render icon("speaker")}{@render icon("dot")}{@render icon("lock")}</span>
          <span class="col tagcol">{@render icon("tag")}</span>
          <span class="col num">#</span>
          <span class="col src">Имя источника</span>
          <span class="col mode">Режим<span>T</span><span>TrkMat</span></span>
          <span class="col switches">
            {#each ["shy", "exposure", "slash", "slash", "frames", "blur", "dot", "cube"] as name}{@render icon(name)}{/each}
          </span>
          <span class="col parent">Родительский элемент</span>
          <span class="col keys">Ключи</span>
        </div>
        <div class="layer-body"></div>
      </div>
      <div class="track">
        <div class="nav-bar"></div>
        <div class="ruler">
          {#each seconds as sec}<span>{sec}</span>{/each}
        </div>
        <div class="work"></div>
        <div class="cache"></div>
        <div class="lane"></div>
      </div>
      <div class="tl-side">
        {@render icon("marker")}
        {@render icon("ghost")}
      </div>
    </div>
    <footer class="tl-foot">
      <div class="tl-modes">
        <button aria-label="Переключатели слоёв">{@render icon("toggleA")}</button>
        <button aria-label="Режимы">{@render icon("toggleB")}</button>
        <button aria-label="Точки входа и выхода">{@render icon("braces")}</button>
      </div>
      <label class="zoomer">
        {@render icon("hill")}
        <input type="range" min="0" max="100" bind:value={zoom} aria-label="Масштаб времени" />
        {@render icon("hills")}
      </label>
      <span class="corner"></span>
    </footer>
  </section>

  <footer class="taskbar">
    {#each tasks as task}
      <button class="task" class:wide={task.wide} class:open={task.text} class:active={task.active} aria-label={task.label}>
        {#if task.icon.length === 2 && task.icon !== "me"}{@render adobe(task.icon)}{:else}{@render icon(task.icon)}{/if}
        {#if task.text}<span>{task.text}</span>{/if}
        {#if task.badge}<em>{task.badge}</em>{/if}
      </button>
    {/each}
    <div class="tray">
      {#each ["up", "at", "volume", "net", "defender", "telegram"] as name}
        <button aria-label={name}>{@render icon(name)}</button>
      {/each}
      <button class="lang">ENG</button>
      <button class="date"><span>17:54</span><span>10.09.2024</span></button>
      <button class="note" aria-label="Уведомления">{@render icon("notes")}</button>
    </div>
  </footer>

  <div class="caption">Math.floor()</div>
  <svg class="cursor" viewBox="0 0 16 26" aria-hidden="true">
    <path d="M1 1v20l4-4 2.500 7.500 5-1.500-3.500-7h6z" fill="#fff" stroke="#111" />
    <path d="m5 10 3.500 9" stroke="#111" />
  </svg>
</div>

<style>
  :global(body) { background: #2a2a2a; }
  :global(*) { box-sizing: border-box; }

  .screen {
    position: relative;
    display: flex;
    flex-direction: column;
    min-height: 100vh;
    overflow: hidden;
    background: #1a1a1a;
    color: #b8b8b8;
    font: 9px/12px "Open Sans", "Noto Sans", sans-serif;
    white-space: nowrap;
  }
  button, input, select {
    font: inherit;
    color: inherit;
    background: none;
    border: 0;
    border-radius: 0;
    padding: 0;
    margin: 0;
    outline: none;
    min-width: 0;
  }
  button {
    display: flex;
    align-items: center;
    justify-content: center;
    flex-shrink: 0;
    white-space: nowrap;
  }
  .icon { width: 13px; height: 13px; flex-shrink: 0; }
  .blue { color: #4cb4dc; }
  .sq { width: 9px; height: 9px; flex-shrink: 0; }

  .burger {
    width: 6px;
    height: 7px;
    border-top: 1px solid;
    border-bottom: 1px solid;
    background: linear-gradient(currentColor, currentColor) center / 100% 1px no-repeat;
  }

  /* ── Заголовок и меню ── */
  .title-bar, .menu { font-family: Roboto, "Open Sans", sans-serif; font-size: 10px; }
  .title-bar {
    display: flex;
    align-items: center;
    height: 19px;
    padding-left: 2px;
    gap: 5px;
    background: #fff;
    color: #222;
  }
  .win-buttons { display: flex; margin-left: auto; padding-right: 2px; }
  .win-buttons button { width: 39px; height: 19px; }
  .win-buttons svg { width: 9px; height: 9px; }
  .menu {
    display: flex;
    height: 18px;
    padding: 0 0 0 4px;
    gap: 9px;
    background: #fff;
    color: #222;
  }

  .adobe {
    display: grid;
    place-items: center;
    width: 19px;
    height: 19px;
    border: 1px solid;
    font-size: 11px;
    font-weight: 600;
    flex-shrink: 0;
  }
  .adobe.Pr { color: #c98be0; background: #2a0634; }
  .adobe.Ae { color: #b79af0; background: #1f0740; }
  .adobe.Au { color: #2bb59a; background: #06302a; }
  .adobe.small { width: 11px; height: 11px; font-size: 7px; line-height: 8px; }

  /* ── Панель инструментов ── */
  .toolbar {
    display: flex;
    align-items: center;
    height: 20px;
    background: #434343;
  }
  .grip { width: 9px; height: 14px; border-right: 2px dotted #2c2c2c; flex-shrink: 0; }
  .tools { display: flex; height: 20px; color: #bdbdbd; }
  .tools .icon { width: 14px; height: 14px; }
  .t21 button { width: 21px; }
  .t21.g2 { margin-left: 5px; padding-right: 3px; border-right: 1px solid #383838; }
  .t22 { padding-left: 1px; }
  .t22 button { width: 22px; }
  .t28 { border-left: 1px solid #383838; padding-right: 15px; border-right: 1px solid #2c2c2c; }
  .t28 button { width: 28px; }
  .t20 { padding-left: 15px; color: #858585; }
  .t20 button { width: 20px; }
  .type-tool { font: 17px/16px "Liberation Serif", serif; }
  .snap { display: flex; align-items: center; gap: 3px; margin-left: 11px; color: #b0b0b0; }
  .snap input { appearance: none; width: 11px; height: 11px; background: #2a2a2a; }
  .snap-tools { padding-left: 3px; }
  .workspaces {
    display: flex;
    align-items: center;
    height: 20px;
    margin-left: auto;
    padding-left: 18px;
    border-left: 1px solid #2c2c2c;
    border-right: 1px solid #2c2c2c;
    color: #b0b0b0;
  }
  .ws-main { gap: 13px; margin-right: 20px; }
  .ws { margin-right: 36px; }
  .workspaces .more { margin-left: 14px; padding-right: 8px; }
  .more { padding-bottom: 3px; font-size: 15px; color: #c8c8c8; }
  .sync { width: 24px; }
  .sync .icon { width: 16px; height: 16px; }
  .help {
    display: flex;
    align-items: center;
    flex: 0 1 162px;
    height: 16px;
    margin: 0 5px 0 6px;
    gap: 8px;
    background: #2d2d2d;
    color: #ccc;
  }
  .help .icon { width: 12px; height: 12px; }
  .help input { flex: 1; }
  input::placeholder { color: #d0d0d0; opacity: 1; }

  /* ── Вкладки ── */
  .tabs { display: flex; height: 24px; background: #2a2a2a; flex-shrink: 0; }
  .tab { color: #858585; }
  .tab.on { background: #434343; color: #d8d8d8; }
  .tab .burger { color: #b0b0b0; }
  .close { color: #aaa; font-size: 10px; }

  .panels {
    display: grid;
    grid-template-columns: 267px minmax(0, 1fr) 186px;
    grid-template-rows: minmax(0, 1fr);
    gap: 4px;
    flex: 0 0 352px;
    margin: 2px 0 4px;
  }
  .project, .comp { display: flex; flex-direction: column; min-width: 0; background: #434343; }

  .search {
    display: flex;
    align-items: center;
    height: 16px;
    padding-left: 4px;
    background: #2d2d2d;
    color: #bbb;
  }
  .search input { flex: 1; }

  /* ── Проект ── */
  .tab-project { padding: 0 8px 0 11px; gap: 9px; }
  .tab-fx { flex: 1 1 0; min-width: 0; padding-left: 22px; gap: 8px; justify-content: flex-start; overflow: hidden; color: #707070; }
  .tab-fx span { overflow: hidden; }
  .project .more { width: 14px; margin-left: 18px; }
  .thumb { height: 92px; border-bottom: 1px solid #404040; }
  .project > .search { margin: 0 4px 6px 6px; }
  .files { display: flex; flex: 1; position: relative; border-top: 1px solid #2a2a2a; }
  table { width: 100%; height: 80px; border-collapse: collapse; table-layout: fixed; }
  .c-name { width: 98px; }
  .c-tag { width: 20px; }
  .c-type { width: 66px; }
  .c-size { width: 40px; }
  th {
    height: 16px;
    padding: 0 0 0 3px;
    text-align: left;
    font-weight: 400;
    font-size: 8px;
    background: #4c4c4c;
    border-bottom: 1px solid #222;
    border-left: 1px solid #3a3a3a;
  }
  th .icon { display: block; width: 11px; height: 11px; margin-left: 1px; }
  .name-head { padding: 0 3px 0 17px; border-left: 0; }
  .name-head span { display: flex; align-items: center; justify-content: space-between; }
  .sort { border: 4px solid transparent; border-top: 0; border-bottom: 4px solid #999; }
  td { height: 16px; padding: 0 0 0 4px; }
  td:first-child { padding: 0; }
  .mid { padding: 0 0 0 6px; }
  .sq.label { display: block; width: 8px; height: 8px; }
  .file { display: flex; align-items: center; gap: 2px; }
  .file .icon { width: 13px; height: 13px; }
  .twist { width: 6px; height: 8px; margin: 0 1px 0 6px; }
  .twist.show { background: #bbb; clip-path: polygon(0 0, 100% 50%, 0 100%); }
  .file-scroll {
    position: absolute;
    top: 16px;
    right: 0;
    bottom: 0;
    width: 14px;
    padding-top: 1px;
    background: #323232;
  }
  .project-foot { display: flex; height: 15px; background: #3d3d3d; border-top: 1px solid #2e2e2e; color: #b0b0b0; }
  .project-foot button { width: 21px; }
  .project-foot .depth { width: 72px; }
  .project-foot button:last-of-type { width: 40px; }
  .hscroll { flex: 1; margin-left: 20px; background: #303030; }

  /* ── Композиция ── */
  .tab-comp { padding: 0 7px 0 8px; gap: 7px; }
  .tab-comp .icon { width: 10px; height: 10px; }
  .tab-comp b { font-weight: 400; }
  .tab-comp .burger { margin-left: 3px; }
  .tab-layer { padding-left: 24px; }
  .crumbs { height: 20px; padding: 2px 0 0 16px; border-bottom: 1px solid #393939; }
  .crumbs button { width: 45px; height: 14px; background: #171717; }
  .viewer { flex: 1; display: grid; place-items: center; }
  .canvas { width: 52%; aspect-ratio: 16 / 9; background: #0d0d0d; }
  .comp-foot { display: flex; height: 19px; border-top: 1px solid #2a2a2a; background: #3d3d3d; color: #b4b4b4; }
  .comp-foot button { width: 19px; }
  .comp-foot .icon { width: 12px; height: 12px; }

  .drop { position: relative; display: flex; background: #2c2c2c; color: #ccc; min-width: 0; }
  .drop select { appearance: none; flex: 1; width: 100%; padding: 0 13px 0 4px; overflow: hidden; }
  .drop::after, .caret {
    content: "";
    width: 8px;
    height: 5px;
    background: #ddd;
    clip-path: polygon(0 0, 100% 0, 50% 100%);
  }
  .drop::after { position: absolute; right: 3px; top: calc(50% - 3px); pointer-events: none; }
  .d50 { width: 55px; margin-left: 1px; }
  .comp-foot .time { width: 58px; background: #353535; color: #c8c8c8; }
  .d-res { width: 70px; margin-left: 1px; }
  .d-cam { width: 86px; margin-left: 1px; }
  .d-view { width: 59px; margin-left: 2px; }
  .comp-foot .expo { margin-left: 2px; }
  .comp-foot .expo-value { width: 20px; }

  /* ── Символ ── */
  .side { padding-right: 15px; background: #2e2e2e; }
  .stack { display: flex; flex-direction: column; height: 100%; background: #2a2a2a; }
  .fold {
    height: 26px;
    padding: 0 10px;
    justify-content: flex-start;
    background: #2a2a2a;
    border-bottom: 2px solid #1a1a1a;
    color: #858585;
  }
  .char { height: 223px; padding-left: 4px; background: #434343; border-bottom: 1px solid #1a1a1a; }
  h2 {
    display: flex;
    align-items: center;
    justify-content: space-between;
    height: 24px;
    margin: 0 0 6px;
    padding: 0 9px 0 6px;
    font: inherit;
    color: #d0d0d0;
  }
  .fonts { display: flex; height: 36px; }
  .font-selects { display: grid; width: 102px; gap: 4px; }
  .font-mid { display: flex; flex-direction: column; align-items: center; justify-content: space-between; width: 25px; padding: 2px 0 1px; color: #c8c8c8; }
  .bw { width: 16px; height: 13px; background: linear-gradient(#000 50%, #fff 50%); border: 1px solid #777; }
  .swatches { position: relative; flex: 1; }
  .swatches button { position: absolute; }
  .fill-color { left: 0; top: 0; width: 24px; height: 24px; background: #ff2a12; border: 1px solid #a33; }
  .stroke-color { left: 12px; top: 12px; width: 23px; height: 23px; background: #222; border: 6px solid #f8eeee; }
  .no-color { left: 0; top: 26px; width: 9px; height: 9px; background: linear-gradient(135deg, #ddd 45%, #d33 45% 55%, #ddd 55%); }
  .swatches .swap { left: 25px; top: 2px; }
  .swap .icon { width: 9px; height: 9px; }

  .metrics { display: grid; grid-template-columns: 88px 1fr; grid-auto-rows: 17px; padding: 7px 7px 4px 0; border-bottom: 1px solid #393939; }
  .hot { display: flex; align-items: center; gap: 4px; min-width: 0; }
  .hot .icon { width: 15px; height: 15px; margin-top: 3px; }
  .metrics .hot:nth-child(even) { gap: 8px; }
  .hot-value { display: flex; gap: 3px; flex: 0 0 39px; width: 39px; margin: 0 -3px 0 1px; overflow: hidden; color: #999; }
  .metrics .hot:nth-child(even) .hot-value { margin-right: -7px; }
  .hot-value input { color: #4cb4dc; flex-shrink: 0; }
  .hot-value.off input { color: #777; }
  .caret { flex-shrink: 0; width: 6px; background: #bbb; }
  .stroke-row { display: flex; height: 24px; padding: 4px 5px 4px 0; gap: 4px; }
  .stroke-row .icon { margin-top: 0; width: 13px; height: 13px; margin-right: 2px; }
  .stroke-row .drop { flex: 1; }
  .stroke-row select { padding: 0 11px 0 3px; }
  .stroke-row + .metrics { border-top: 1px solid #393939; border-bottom: 0; padding-top: 3px; }
  .faux { display: flex; padding: 9px 0 0 15px; font: 13px/14px "Liberation Serif", serif; color: #ccc; }
  .faux button { width: 22px; align-items: baseline; }
  .faux .on { color: #4cb4dc; }
  .faux small { font-size: 9px; }
  .faux sup, .faux sub { font-size: 8px; line-height: 8px; }
  .faux sup { align-self: flex-start; }

  /* ── Таймлайн ── */
  .timeline { flex: 1; display: flex; flex-direction: column; background: #434343; }
  .tab-queue { width: 138px; }
  .tab-seq { width: 91px; gap: 8px; }
  .tab-seq .burger { margin-left: 3px; }
  .tab-next { padding-left: 23px; gap: 12px; }
  .tl-grid { flex: 1; display: grid; grid-template-columns: 622px minmax(0, 1fr) 15px; }
  .layers { display: flex; flex-direction: column; border-right: 1px solid #2e2e2e; }
  .tl-top { display: flex; align-items: center; height: 30px; }
  .clock { display: flex; flex-direction: column; align-items: center; width: 102px; color: #45c3f0; }
  .clock strong { font: bold 14px/15px "Open Sans", sans-serif; }
  .clock span { font-size: 8px; line-height: 12px; color: #4ba9d2; }
  .tl-top .search { flex: 0 1 351px; margin-bottom: 1px; }
  .tl-icons { display: flex; margin-left: 9px; }
  .tl-icons button { width: 26px; }
  .cols {
    display: flex;
    height: 16px;
    background: #4c4c4c;
    border-top: 1px solid #2a2a2a;
    border-bottom: 1px solid #2a2a2a;
    font-size: 8px;
    color: #b4b4b4;
  }
  .cols .icon { width: 10px; height: 10px; }
  .col { display: flex; align-items: center; border-right: 1px solid #363636; padding-left: 4px; flex-shrink: 0; overflow: hidden; }
  .av { width: 58px; gap: 3px; }
  .tagcol { width: 28px; justify-content: center; padding-left: 9px; }
  .num { width: 26px; }
  .src { width: 109px; }
  .mode { width: 138px; }
  .mode span { margin-left: 5px; }
  .mode span:first-child { margin-left: 36px; }
  .switches { width: 114px; gap: 2px; }
  .parent { width: 98px; }
  .keys { width: 38px; }
  .layer-body { flex: 1; }

  .track { display: flex; flex-direction: column; }
  .nav-bar {
    height: 8px;
    margin: 5px 0 0 7px;
    background: #7c7c7c;
    border-right: 5px solid #2fa8d8;
    border-radius: 0 3px 3px 0;
  }
  .ruler { display: flex; justify-content: space-between; height: 16px; padding: 1px 6px 0 7px; font-size: 8px; }
  .ruler span {
    display: flex;
    flex-direction: column;
    align-items: center;
    justify-content: space-between;
    width: 0;
  }
  .ruler span::after {
    content: "";
    width: 1px;
    height: 3px;
    flex-shrink: 0;
    background: #aaa;
  }
  .work { height: 14px; margin-left: 7px; background: #6e6e6e; border-top: 1px solid #222; border-right: 5px solid #2fa8d8; }
  .cache { height: 3px; margin: 0 6px 0 7px; background: #2c8c3c; border-top: 1px solid #143a1a; }
  .lane { flex: 1; margin: 0 6px; background: #515151; border-left: 2px solid #4a90b0; }
  .tl-side { display: flex; flex-direction: column; align-items: center; gap: 5px; padding-top: 30px; background: #343434; }
  .tl-side .icon { width: 12px; height: 12px; }
  .tl-foot { display: flex; height: 15px; border-top: 1px solid #2a2a2a; background: #2c2c2c; }
  .tl-modes { display: flex; width: 622px; padding-left: 4px; background: #434343; }
  .tl-modes button { width: 15px; color: #bbb; }
  .tl-modes .icon { width: 11px; height: 11px; }
  .zoomer { display: flex; align-items: center; width: 90px; padding: 0 3px; gap: 5px; background: #434343; }
  .zoomer .icon { width: 10px; }
  .zoomer .icon:last-child { width: 15px; }
  .zoomer input {
    appearance: none;
    flex: 1;
    height: 2px;
    background: #3a3a3a;
  }
  .zoomer input::-webkit-slider-thumb {
    appearance: none;
    width: 9px;
    height: 10px;
    background: #9a9a9a;
    clip-path: polygon(50% 0, 100% 30%, 100% 100%, 0 100%, 0 30%);
  }
  .corner { width: 15px; margin-left: auto; background: #434343; }

  /* ── Панель задач ── */
  .taskbar { display: flex; height: 34px; background: #151515; color: #eee; font-size: 10px; }
  .task { position: relative; width: 36px; height: 34px; }
  .task.wide { width: 40px; }
  .task .icon { width: 19px; height: 19px; }
  .task.open {
    width: 68px;
    margin: 0 3px 0 2px;
    padding-left: 3px;
    gap: 4px;
    justify-content: flex-start;
    border-bottom: 2px solid #b7cf6c;
  }
  .task.active { width: 74px; margin: 0 0 0 -4px; padding-left: 6px; background: #363636; }
  .task em {
    position: absolute;
    right: 3px;
    bottom: 4px;
    width: 13px;
    height: 13px;
    border: 1px solid #777;
    border-radius: 50%;
    background: #1d1d1d;
    font: 9px/11px "Open Sans", sans-serif;
  }
  .tray { display: flex; margin-left: auto; padding-right: 12px; }
  .tray button { width: 20px; }
  .tray .icon { width: 13px; height: 13px; }
  .tray .lang { width: 30px; }
  .tray .date { flex-direction: column; width: 58px; line-height: 15px; font-size: 9px; }
  .tray .note { width: 32px; }

  /* ── Титр и курсор поверх экрана ── */
  .caption {
    position: absolute;
    left: 19.5%;
    top: 369px;
    color: #e6e6e6;
    font: 135px/150px "Liberation Serif", serif;
    -webkit-text-stroke: 2px #e6e6e6;
    pointer-events: none;
  }
  .cursor { position: absolute; left: 37.2%; top: 541px; width: 17px; height: 27px; pointer-events: none; }
</style>
